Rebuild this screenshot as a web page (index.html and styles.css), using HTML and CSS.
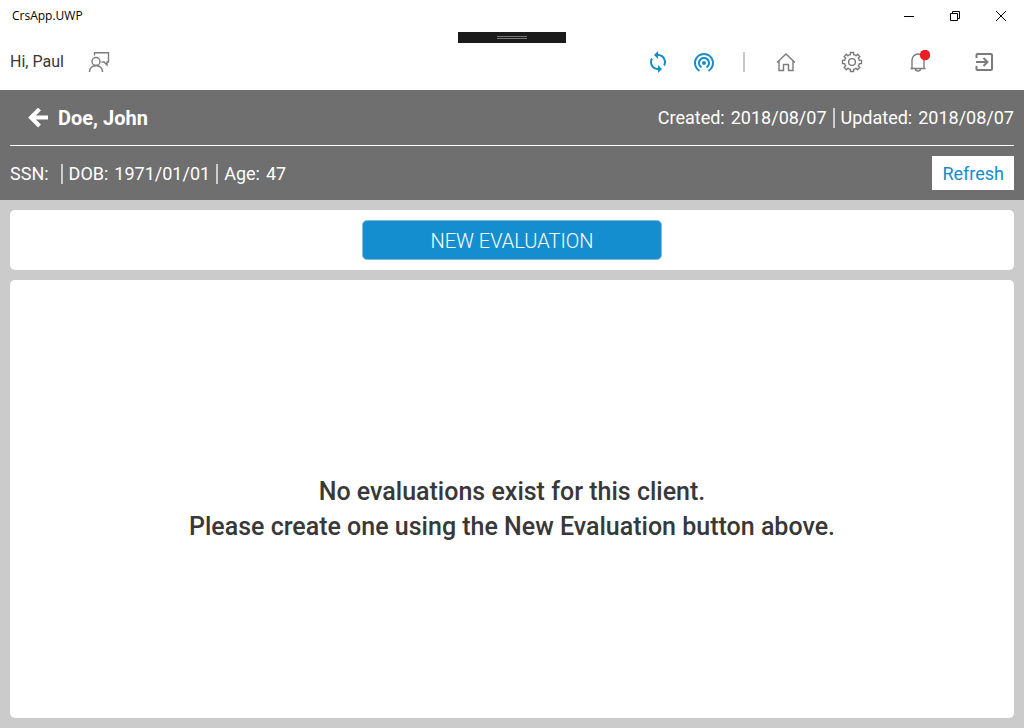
FILE: index.html
```html
<!DOCTYPE html>
<html lang="en">
<head>
<meta charset="utf-8">
<meta name="viewport" content="width=device-width, initial-scale=1">
<title>CrsApp.UWP</title>
<link rel="stylesheet" href="styles.css">
</head>
<body>
<div class="titlebar">
  <span class="app-name">CrsApp.UWP</span>
  <div class="window-controls">
    <button class="window-button" aria-label="Minimize"><svg width="10" height="10" viewBox="0 0 10 10"><path d="M0 5.500h10"/></svg></button>
    <button class="window-button" aria-label="Restore"><svg width="10" height="10" viewBox="0 0 10 10"><path d="M.5 2.500h7v7h-7zM2.500 2.500v-2h7v7h-2"/></svg></button>
    <button class="window-button" aria-label="Close"><svg width="10" height="10" viewBox="0 0 10 10"><path d="M0 0l10 10M10 0L0 10"/></svg></button>
  </div>
</div>
<div class="debug-handle"><span class="grip"></span></div>

<header class="toolbar">
  <span class="greeting">Hi, Paul</span>
  <button class="icon-button feedback" aria-label="Feedback"><svg class="line-icon" width="24" height="24" viewBox="0 0 24 24"><circle cx="9" cy="11.500" r="4"/><path d="M2.500 22v-.5a6.500 6 0 0 1 13 0v.5M7.500 5.500V2.800h14v9.200H20v3l-3-3h-2.500"/></svg></button>
  <nav class="actions" aria-label="Main">
    <button class="icon-button status" aria-label="Sync"><svg class="blue-icon" width="24" height="24" viewBox="0 0 24 24"><path d="M12 4V1L8 5l4 4V6c3.310 0 6 2.690 6 6 0 1.010-.25 1.970-.7 2.800l1.460 1.460C19.540 15.030 20 13.570 20 12c0-4.420-3.580-8-8-8zm0 14c-3.310 0-6-2.690-6-6 0-1.010.25-1.970.7-2.800L5.240 7.740C4.460 8.970 4 10.430 4 12c0 4.420 3.580 8 8 8v3l4-4-4-4v3z"/></svg></button>
    <button class="icon-button status" aria-label="Connection"><svg class="blue-icon" width="24" height="24" viewBox="0 0 24 24"><path d="M12 11c-1.100 0-2 .9-2 2s.9 2 2 2 2-.9 2-2-.9-2-2-2zm6 2c0-3.310-2.690-6-6-6s-6 2.690-6 6c0 2.220 1.210 4.150 3 5.190l1-1.740c-1.190-.7-2-1.970-2-3.450 0-2.210 1.790-4 4-4s4 1.790 4 4c0 1.480-.81 2.750-2 3.450l1 1.740c1.790-1.040 3-2.970 3-5.190zM12 3C6.480 3 2 7.480 2 13c0 3.700 2.010 6.920 4.990 8.650l1-1.730C5.610 18.530 4 15.960 4 13c0-4.420 3.580-8 8-8s8 3.580 8 8c0 2.960-1.610 5.530-4 6.920l1 1.730c2.990-1.730 5-4.950 5-8.650 0-5.520-4.480-10-10-10z"/></svg></button>
    <span class="divider"></span>
    <button class="icon-button" aria-label="Home"><svg class="line-icon" width="24" height="24" viewBox="0 0 24 24"><path d="M3 12.500l9-8.500 9 8.500M5 11v9.500h4.500v-6h5v6H19V11"/></svg></button>
    <button class="icon-button" aria-label="Settings"><svg class="line-icon" width="24" height="24" viewBox="-12 -12 24 24"><circle r="3.400"/><path id="tooth" d="M-2.950-7.100L-1.600-7.300V-9.500H1.600V-7.300L2.950-7.100"/><use href="#tooth" transform="rotate(45)"/><use href="#tooth" transform="rotate(90)"/><use href="#tooth" transform="rotate(135)"/><use href="#tooth" transform="rotate(180)"/><use href="#tooth" transform="rotate(225)"/><use href="#tooth" transform="rotate(270)"/><use href="#tooth" transform="rotate(315)"/></svg></button>
    <button class="icon-button" aria-label="Notifications"><svg class="line-icon" width="24" height="24" viewBox="0 0 24 24"><path d="M4.500 18.500h15M6 18.500V10a6 6 0 0 1 12 0v8.500M9.500 19a2.500 2 0 0 0 5 0"/><circle class="badge" cx="19" cy="5" r="5.200"/></svg></button>
    <button class="icon-button" aria-label="Sign out"><svg class="line-icon heavy" width="24" height="24" viewBox="0 0 24 24"><path d="M4.500 8V5q0-1 1-1h13.500q1 0 1 1v14q0 1-1 1H5.500q-1 0-1-1v-3M4 12h11.500M11.500 8l4 4-4 4"/></svg></button>
  </nav>
</header>

<section class="client">
  <div class="client-row client-title">
    <button class="back" aria-label="Back"><svg width="20" height="20" viewBox="0 0 20 20"><path d="M20 9.500H3M11.500 1L3 9.500l8.500 8.500"/></svg></button>
    <h1 class="client-name">Doe, John</h1>
    <div class="facts">
      <span class="fact"><span>Created:</span><span>2018/08/07</span></span>
      <span class="bar"></span>
      <span class="fact"><span>Updated:</span><span>2018/08/07</span></span>
    </div>
  </div>
  <div class="client-row client-details">
    <div class="facts">
      <span class="fact"><span>SSN:</span><span></span></span>
      <span class="bar"></span>
      <span class="fact"><span>DOB:</span><span>1971/01/01</span></span>
      <span class="bar"></span>
      <span class="fact"><span>Age:</span><span>47</span></span>
    </div>
    <button class="refresh">Refresh</button>
  </div>
</section>

<main class="content">
  <section class="card action-card"><button class="primary">NEW EVALUATION</button></section>
  <section class="card empty-card">
    <p class="empty-text">No evaluations exist for this client.<br>Please create one using the New Evaluation button above.</p>
  </section>
</main>
</body>
</html>
```
FILE: styles.css
```css
* { box-sizing: border-box; }
body {
  margin: 0;
  min-height: 100vh;
  display: flex;
  flex-direction: column;
  position: relative;
  background: #fff;
  color: #383838;
  font-family: Roboto, "Liberation Sans", sans-serif;
}
button { border: 0; padding: 0; background: none; font: inherit; cursor: pointer; }
svg { display: block; fill: none; }

.titlebar { display: flex; justify-content: space-between; height: 32px; }
.app-name { padding-left: 12px; font: 12px/32px "Open Sans", "Noto Sans", sans-serif; color: #000; }
.window-controls { display: flex; }
.window-button { width: 46px; display: grid; place-items: center; }
.window-button svg { stroke: #000; stroke-width: 1; }

.debug-handle {
  position: absolute;
  top: 32px;
  left: 50%;
  width: 108px;
  height: 11px;
  margin-left: -54px;
  display: grid;
  place-items: center;
  background: #1b1b1b;
}
.grip { width: 30px; height: 3px; border: solid #777; border-width: 1px 0; }

.toolbar { display: flex; align-items: center; height: 58px; padding: 2px 7px 0 10px; }
.greeting { font-size: 16px; line-height: 24px; }
.icon-button { width: 66px; height: 40px; display: grid; place-items: center; }
.icon-button.feedback { width: 24px; margin-left: 23px; }
.icon-button.status { width: 46px; }
.line-icon { stroke: #7b7b7b; stroke-width: 1.400; }
.line-icon.heavy { stroke-width: 2; }
.line-icon .badge { fill: #ee1c25; stroke: none; }
.blue-icon { fill: #168dcb; }
.actions { display: flex; align-items: center; margin-left: auto; }
.divider { width: 2px; height: 20px; margin: 0 8px 0 16px; background: #c8c8c8; }

.client { padding: 0 10px; background: #6f6f6f; color: #fff; }
.client-row { display: flex; align-items: center; }
.client-title { height: 56px; border-bottom: 1px solid #fff; }
.client-details { height: 54px; justify-content: space-between; }
.back { margin: 0 10px 0 18px; }
.back svg { stroke: #fff; stroke-width: 4; }
.client-name { margin: 0; font-size: 20px; line-height: 24px; font-weight: 700; }
.facts { display: flex; align-items: center; gap: 6px; font-size: 18px; line-height: 24px; }
.client-title .facts { margin-left: auto; }
.client-details .facts { padding-top: 1px; }
.fact { display: flex; gap: 6px; }
.bar { width: 2px; height: 20px; background: #ccc; }
.refresh { height: 34px; padding: 0 10px; background: #fff; color: #168dcb; font-size: 18px; }

.content { flex: 1; display: flex; flex-direction: column; gap: 10px; padding: 10px; background: #cbcbcb; }
.card { display: flex; justify-content: center; align-items: center; background: #fff; border-radius: 5px; }
.action-card { padding: 10px; }
.primary {
  width: 300px;
  height: 40px;
  padding-top: 2px;
  border: 1px solid #8ab9d4;
  border-radius: 5px;
  background: #148ecf;
  color: #fff;
  font-size: 20px;
  font-weight: 300;
}
.empty-card { flex: 1; padding: 20px 20px 0; }
.empty-text { margin: 0; text-align: center; font-size: 25px; line-height: 35px; font-weight: 500; }
```
